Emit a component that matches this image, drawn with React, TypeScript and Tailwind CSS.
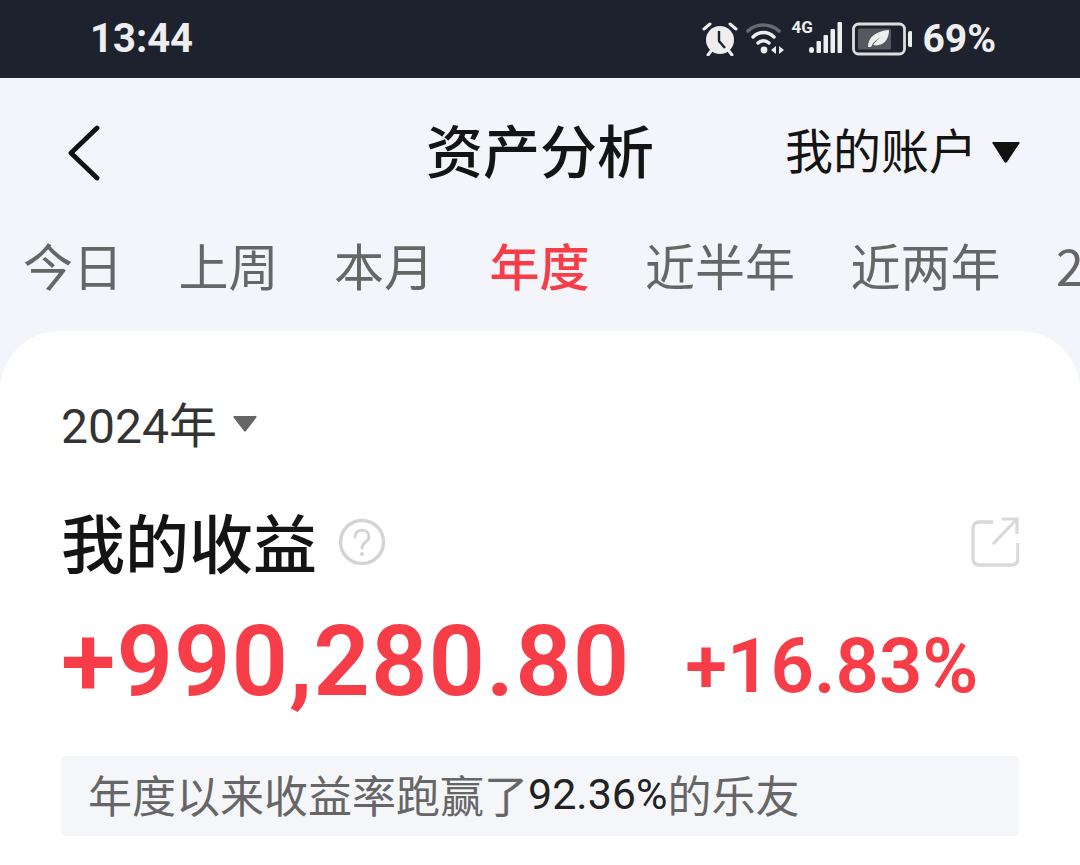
import React from "react";

const cjk = "font-['Noto_Sans_CJK_SC','Noto_Sans',sans-serif]";
const num = "font-['Roboto','Noto_Sans_CJK_SC',sans-serif]";

function StatusIcons() {
  return (
    <div className="flex items-center">
      <svg width="36" height="34" viewBox="0 0 36 34" className="mr-[8px]">
        <circle cx="18" cy="18" r="14" fill="#eeeeee" />
        <path d="M17 9v10l6 7" stroke="#1d222e" strokeWidth="2.4" fill="none" />
        <path d="M2 7l6-5M34 7l-6-5M9 29l-3 4M27 29l3 4" stroke="#eeeeee" strokeWidth="3" strokeLinecap="round" />
      </svg>
      <svg width="40" height="34" viewBox="0 0 40 34" className="mr-[5px]">
        <path d="M2 9C10 1 24 1 33 9" stroke="#666a73" strokeWidth="3.6" fill="none" strokeLinecap="round" />
        <path d="M7 15C13 9 22 9 28 15" stroke="#eeeeee" strokeWidth="3.4" fill="none" strokeLinecap="round" />
        <path d="M12 21C15 18 20 18 23 21" stroke="#eeeeee" strokeWidth="3.4" fill="none" strokeLinecap="round" />
        <circle cx="18" cy="28" r="3.4" fill="#eeeeee" />
        <path d="M30 24v8l-5-4zM33 24v8l5-4z" fill="#eeeeee" />
      </svg>
      <div className="relative w-[50px] h-[34px] mr-[11px]">
        <span className={`absolute left-0 top-[-4px] text-[17px] leading-[18px] font-bold text-[#eeeeee] ${num}`}>4G</span>
        <svg width="34" height="32" viewBox="0 0 34 32" className="absolute left-[17px] top-[-1px]">
          <rect x="1" y="26" width="5" height="6" rx="2.5" fill="#eeeeee" />
          <rect x="8.5" y="20" width="4.5" height="12" rx="1" fill="#eeeeee" />
          <rect x="15.5" y="14" width="4.5" height="18" rx="1" fill="#eeeeee" />
          <rect x="22.5" y="8" width="4.5" height="24" rx="1" fill="#eeeeee" />
          <rect x="29.5" y="1" width="4.5" height="31" rx="1" fill="#eeeeee" />
        </svg>
      </div>
      <svg width="60" height="34" viewBox="0 0 60 34" className="mr-[10px]">
        <rect x="1.5" y="2" width="51" height="30" rx="5" fill="none" stroke="#dddddd" strokeWidth="2.8" />
        <rect x="6" y="6.5" width="33" height="21" rx="1.5" fill="#55585f" />
        <path d="M16 25C16 15 24 9 37 8C37 19 30 25 21 23C24 19 26 17 29 15C25 17 21 20 19 25Z" fill="#eeeeee" />
        <rect x="56" y="9" width="4.5" height="16" rx="2" fill="#eeeeee" />
      </svg>
      <span className={`text-[39px] leading-[40px] font-bold text-[#eeeeee] ${num}`}>69%</span>
    </div>
  );
}

export default function App() {
  const tabs = ["今日", "上周", "本月", "年度", "近半年", "近两年", "2"];
  return (
    <div className={`w-[1080px] h-[865px] overflow-hidden bg-[#f3f5fa] ${cjk}`}>
      <div className="h-[78px] bg-[#1d222e] flex items-center justify-between pl-[90px] pr-[84px]">
        <span className={`text-[40px] leading-[44px] font-bold text-[#eeeeee] ${num}`}>13:44</span>
        <StatusIcons />
      </div>

      <div className="h-[148px] flex items-center justify-between pl-[68px] pr-[60px] relative">
        <svg width="32" height="56" viewBox="0 0 32 56" className="mt-[2px]">
          <path d="M29 3L3 28l26 25" stroke="#111111" strokeWidth="4.8" fill="none" strokeLinecap="round" strokeLinejoin="round" />
        </svg>
        <div className="absolute left-0 right-0 top-0 h-full flex items-center justify-center">
          <span className="text-[57px] leading-[70px] font-medium text-[#141414] mb-[8px]">资产分析</span>
        </div>
        <div className="flex items-center gap-[15px]">
          <span className="text-[48px] leading-[60px] font-normal text-[#141414] mb-[8px]">我的账户</span>
          <svg width="28" height="22" viewBox="0 0 28 22">
            <path d="M2 1h24a1 1 0 0 1 1 2L15 21a1.5 1.5 0 0 1-2.6 0L1 3a1 1 0 0 1 1-2z" fill="#111111" />
          </svg>
        </div>
      </div>

      <div className="h-[105px] flex items-start pl-[23px] gap-[55.5px] whitespace-nowrap">
        {tabs.map((t) => (
          <span
            key={t}
            className={`text-[50px] leading-[76px] ${t === "年度" ? "text-[#f73d47] font-medium" : "text-[#666666]"}`}
          >
            {t}
          </span>
        ))}
      </div>

      <div className="h-[600px] bg-white rounded-t-[60px] pt-[63px] px-[61px]">
        <div className="flex items-center h-[60px]">
          <span className="text-[48px] leading-[60px] text-[#333333]">
            <span className={num}>2024</span>年
          </span>
          <svg width="24" height="18" viewBox="0 0 24 18" className="ml-[16px]">
            <path d="M2 1h20a1 1 0 0 1 1 2L13 16a1.3 1.3 0 0 1-2 0L1 3a1 1 0 0 1 1-2z" fill="#666666" />
          </svg>
        </div>

        <div className="flex items-center justify-between mt-[46px] h-[80px]">
          <div className="flex items-center">
            <span className="text-[64px] leading-[80px] font-medium text-[#141414]">我的收益</span>
            <svg width="48" height="48" viewBox="0 0 48 48" className="ml-[21px] mt-[3px]">
              <circle cx="24" cy="24" r="21.5" fill="none" stroke="#d4d4d4" strokeWidth="3.4" />
              <path d="M17 19c0-9 14-9 14 0 0 5-7 5-7 11" fill="none" stroke="#d4d4d4" strokeWidth="3" strokeLinecap="round" />
              <circle cx="24" cy="36" r="2" fill="#d4d4d4" />
            </svg>
          </div>
          <svg width="48" height="50" viewBox="0 0 48 50" className="mt-[3px]">
            <path d="M22 5H8a6 6 0 0 0-6 6v31a6 6 0 0 0 6 6h33a6 6 0 0 0 6-6V26" fill="none" stroke="#d9d9d9" strokeWidth="3.4" />
            <path d="M22 27L46 2M31 2h15v15" fill="none" stroke="#d9d9d9" strokeWidth="3.2" />
          </svg>
        </div>

        <div className="flex items-start mt-[31px] h-[100px] text-[#f73d47] font-semibold whitespace-nowrap">
          <span className={`text-[99px] leading-[100px] tracking-[1px] ${num}`}>+990,280.80</span>
          <span className={`ml-[55px] mt-[5px] text-[76px] leading-[100px] ${num}`}>+16.83%</span>
        </div>

        <div className="mt-[45px] h-[80px] bg-[#f4f6fa] rounded-[6px] flex items-center pl-[27px] pb-[4px] text-[44px] leading-[60px] text-[#666666] whitespace-nowrap">
          <span>年度以来收益率跑赢了</span>
          <span className={`${num} text-[#222222] text-[43px]`}>92.36%</span>
          <span>的乐友</span>
        </div>
      </div>
    </div>
  );
}
